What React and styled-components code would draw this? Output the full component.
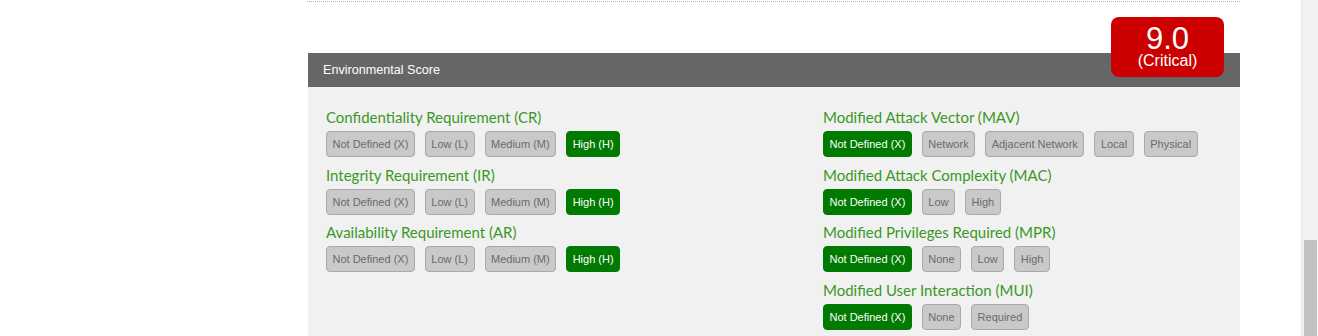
import styled, { createGlobalStyle } from 'styled-components'

const GlobalStyle = createGlobalStyle`
  html, body {
    margin: 0;
    padding: 0;
    background: #fff;
    font-family: "Liberation Sans", Arial, sans-serif;
    overflow: hidden;
  }
`

const leftMetrics = [
  { name: 'Confidentiality Requirement (CR)', options: ['Not Defined (X)', 'Low (L)', 'Medium (M)', 'High (H)'], selected: 3 },
  { name: 'Integrity Requirement (IR)', options: ['Not Defined (X)', 'Low (L)', 'Medium (M)', 'High (H)'], selected: 3 },
  { name: 'Availability Requirement (AR)', options: ['Not Defined (X)', 'Low (L)', 'Medium (M)', 'High (H)'], selected: 3 },
]

const rightMetrics = [
  { name: 'Modified Attack Vector (MAV)', options: ['Not Defined (X)', 'Network', 'Adjacent Network', 'Local', 'Physical'], selected: 0 },
  { name: 'Modified Attack Complexity (MAC)', options: ['Not Defined (X)', 'Low', 'High'], selected: 0 },
  { name: 'Modified Privileges Required (MPR)', options: ['Not Defined (X)', 'None', 'Low', 'High'], selected: 0 },
  { name: 'Modified User Interaction (MUI)', options: ['Not Defined (X)', 'None', 'Required'], selected: 0 },
]

const Metric = ({ name, options, selected }) => (
  <MetricBlock>
    <MetricLabel>{name}</MetricLabel>
    <OptionRow>
      {options.map((opt, i) => (
        <OptionButton key={opt} $active={i === selected}>{opt}</OptionButton>
      ))}
    </OptionRow>
  </MetricBlock>
)

const App = () => {
  return (
    <>
      <GlobalStyle />
      <Page>
        <Main>
          <Column>
            <Divider />
            <Panel>
              <ScoreBadge>
                <ScoreValue>9.0</ScoreValue>
                <ScoreSeverity>(Critical)</ScoreSeverity>
              </ScoreBadge>
              <PanelHeader>Environmental Score</PanelHeader>
              <PanelBody>
                <MetricColumn>
                  {leftMetrics.map(m => <Metric key={m.name} {...m} />)}
                </MetricColumn>
                <MetricColumn>
                  {rightMetrics.map(m => <Metric key={m.name} {...m} />)}
                </MetricColumn>
              </PanelBody>
            </Panel>
          </Column>
        </Main>
        <ScrollTrack>
          <ScrollThumb />
        </ScrollTrack>
      </Page>
    </>
  )
}

const Page = styled.div`
  display: flex;
  height: 336px;
  overflow: hidden;
`

const Main = styled.div`
  flex: 1;
  padding-left: 307px;
`

const Column = styled.div`
  width: 933px;
`

const Divider = styled.div`
  margin-top: 1px;
  border-top: 1px dotted #b4b4b4;
  height: 51px;
`

const Panel = styled.section`
  position: relative;
  margin-left: 1px;
`

const PanelHeader = styled.div`
  height: 34px;
  line-height: 34px;
  background: #666666;
  color: #fff;
  font-size: 12.6px;
  padding-left: 15px;
`

const ScoreBadge = styled.div`
  position: absolute;
  top: -36px;
  right: 16px;
  width: 113px;
  height: 60px;
  background: #cc0000;
  border-radius: 8px;
  color: #fff;
  display: flex;
  flex-direction: column;
  align-items: center;
  text-align: center;
`

const ScoreValue = styled.div`
  font-size: 31px;
  line-height: 29px;
  margin-top: 7px;
`

const ScoreSeverity = styled.div`
  font-size: 16px;
  line-height: 16px;
`

const PanelBody = styled.div`
  background: #f1f1f1;
  padding: 20px 18px 40px;
  display: grid;
  grid-template-columns: 497px 1fr;
`

const MetricColumn = styled.div`
  display: flex;
  flex-direction: column;
`

const MetricBlock = styled.div`
  margin-bottom: 7.5px;
`

const MetricLabel = styled.div`
  font-family: Lato, "Open Sans", sans-serif;
  font-size: 15px;
  line-height: 20px;
  color: #3a9826;
  margin-bottom: 4px;
`

const OptionRow = styled.div`
  display: flex;
  gap: 10px;
`

const OptionButton = styled.span`
  box-sizing: border-box;
  height: 26px;
  line-height: 24px;
  padding: 0 5.5px;
  border: 1px solid ${p => (p.$active ? '#007a00' : '#a9a9a9')};
  border-radius: 4px;
  background: ${p => (p.$active ? '#007a00' : '#c9c9c9')};
  color: ${p => (p.$active ? '#ffffff' : '#6b6b6b')};
  font-size: 11px;
  white-space: nowrap;
`

const ScrollTrack = styled.div`
  width: 17px;
  background: #f1f1f1;
  border-left: 1px solid #e9e9e9;
  box-sizing: border-box;
  display: flex;
  flex-direction: column;
  justify-content: flex-end;
  align-items: center;
`

const ScrollThumb = styled.div`
  width: 13px;
  height: 96px;
  background: #c1c1c1;
`

export default App
